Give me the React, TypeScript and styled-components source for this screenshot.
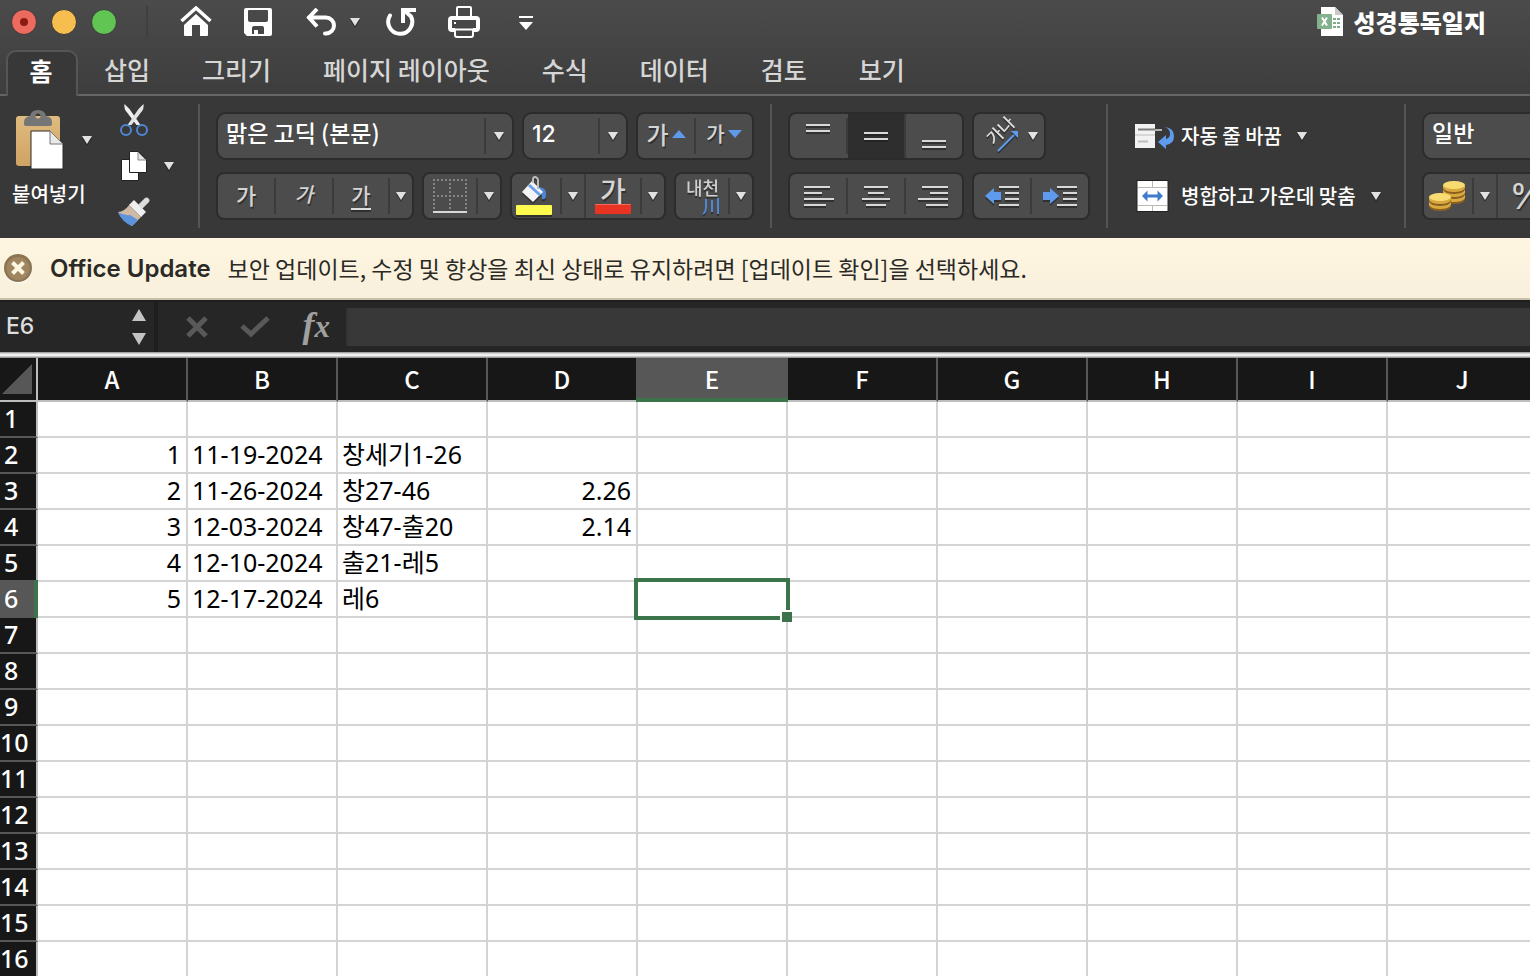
import React, { useState } from "react";
import styled, { createGlobalStyle, css } from "styled-components";

const UI_FONT = `Inter, "Noto Sans CJK KR", sans-serif`;
const KR_FONT = `"Noto Sans CJK KR", "Noto Sans", sans-serif`;
const CELL_FONT = `"Noto Sans", "Noto Sans CJK KR", sans-serif`;

const color = {
  ribbon: "#383838",
  control: "#4c4c4c",
  controlEdge: "#2c2c2c",
  line: "#656565",
  glyph: "#dedede",
  blue: "#5e9bec",
  green: "#3b734a",
  grid: "#d4d4d4",
  header: "#171717",
  headerActive: "#575757",
};

const GlobalStyle = createGlobalStyle`
  *, *::before, *::after { box-sizing: border-box; }
  body { margin: 0; background: #fff; font-family: ${KR_FONT}; }
  button, input, select { font: inherit; color: inherit; margin: 0; }
  button { cursor: pointer; }
`;

/* ---------- Window frame ---------- */

const Window = styled.div`
  display: flex;
  flex-direction: column;
  height: 100vh;
  overflow: hidden;
`;

const Chrome = styled.header`
  background: linear-gradient(#4b4b4b, #3d3d3d);
`;

const TitleBar = styled.div`
  display: flex;
  align-items: center;
  height: 44px;
  padding: 0 44px 0 11px;
`;

const Lights = styled.div`
  display: flex;
  gap: 14px;
  padding-right: 29px;
  border-right: 2px solid #3f3f3f;
  height: 32px;
  align-items: center;
`;

const Light = styled.button<{ $fill: string }>`
  display: flex;
  align-items: center;
  justify-content: center;
  width: 26px;
  height: 26px;
  padding: 0;
  border: 1px solid #3a3a3a;
  border-radius: 50%;
  background: ${(p) => p.$fill};

  &[data-edited="true"]::after {
    content: "";
    width: 8px;
    height: 8px;
    border-radius: 50%;
    background: #8c1a10;
  }
`;

const QuickBar = styled.div`
  display: flex;
  align-items: center;
  margin-left: 32px;
  gap: 32px;
`;

const PlainButton = styled.button`
  display: flex;
  align-items: center;
  gap: 13px;
  padding: 0;
  border: 0;
  background: none;
  color: #fff;
`;

const QuickPair = styled.div`
  display: flex;
  align-items: center;
  gap: 12px;
  margin: 0 -6px 0 2px;
`;

const CustomizeButton = styled(PlainButton)`
  padding: 2px 0 0 7px;
`;

const DocTitle = styled.h1`
  display: flex;
  align-items: center;
  gap: 10px;
  margin: 0 0 0 auto;
  color: #fff;
  font-size: 24px;
  line-height: 32px;
  font-weight: 800;
`;

const Tabs = styled.nav`
  display: flex;
  height: 52px;
  padding: 6px 0 0 6px;
  border-bottom: 2px solid ${color.line};
`;

const Tab = styled.button<{ $active?: boolean }>`
  flex: none;
  height: 44px;
  padding: 0 26px 6px;
  border: 0;
  background: none;
  color: #d6d6d6;
  font-size: 25px;
  line-height: 36px;
  font-weight: 500;
  white-space: nowrap;

  ${(p) =>
    p.$active &&
    css`
      width: 72px;
      height: 46px;
      padding: 0 2px 10px 0;
      border: 2px solid #565656;
      border-bottom: 0;
      border-radius: 10px 10px 0 0;
      background: ${color.ribbon};
      color: #fff;
      font-weight: 700;
    `}
`;

/* ---------- Ribbon ---------- */

const Ribbon = styled.section`
  display: flex;
  flex: none;
  height: 142px;
  overflow: hidden;
  background: ${color.ribbon};
`;

const Separator = styled.span`
  flex: none;
  width: 2px;
  margin: 8px 0 10px;
  background: #555;
`;

const ClipboardGroup = styled.div`
  display: flex;
  flex: none;
  width: 198px;
`;

const PasteButton = styled.button`
  display: flex;
  flex-direction: column;
  align-items: flex-start;
  width: 106px;
  padding: 12px 0 0 12px;
  border: 0;
  background: none;
  color: #fff;
  font-size: 20px;
  line-height: 28px;
  font-weight: 500;
  white-space: nowrap;
`;

const PasteIconRow = styled.span`
  display: flex;
  align-items: center;
  gap: 18px;
  height: 64px;
  margin: 0 0 8px 4px;
`;

const ClipboardTools = styled.div`
  display: flex;
  flex-direction: column;
  gap: 14px;
  padding: 8px 0 0 12px;
`;

const ToolButton = styled(PlainButton)`
  height: 32px;
  gap: 14px;
`;

const Group = styled.div`
  display: flex;
  flex: none;
  flex-direction: column;
  gap: 12px;
  padding: 16px;
`;

const GroupRow = styled.div`
  display: flex;
  gap: 8px;
`;

const Cluster = styled.div<{ $w?: number }>`
  display: flex;
  flex: none;
  width: ${(p) => (p.$w ? `${p.$w}px` : "auto")};
  height: 48px;
  overflow: hidden;
  border: 2px solid ${color.controlEdge};
  border-radius: 8px;
  background: ${color.control};
`;

const Divider = styled.span<{ $full?: boolean }>`
  flex: none;
  width: 2px;
  margin: ${(p) => (p.$full ? "0" : "4px 0")};
  background: #3b3b3b;
`;

const Segment = styled.button<{ $w: number; $active?: boolean }>`
  display: flex;
  flex: none;
  align-items: center;
  justify-content: center;
  gap: 10px;
  width: ${(p) => p.$w}px;
  padding: 0;
  border: 0;
  background: ${(p) => (p.$active ? "#2e2e2e" : "transparent")};
  color: ${color.glyph};
`;

const LetterSegment = styled(Segment)`
  gap: 3px;
  padding-bottom: 4px;
`;

const FillSegment = styled(Segment)`
  justify-content: flex-start;
  padding-left: 4px;
`;

const OrientationSegment = styled(Segment)`
  padding-left: 4px;
`;

const Glyph = styled.span<{ $size: number; $italic?: boolean; $underline?: boolean }>`
  font-size: ${(p) => p.$size}px;
  line-height: 28px;
  font-weight: 500;
  color: #d4d4d4;
  text-shadow: 1px 2px 0 #303030;
  font-style: ${(p) => (p.$italic ? "italic" : "normal")};
  ${(p) =>
    p.$underline &&
    css`
      border-bottom: 2px solid #dedede;
      margin-top: 2px;
      box-shadow: 0 2px 0 #303030;
    `}
`;

const Combo = styled.label<{ $w: number }>`
  display: flex;
  flex: none;
  align-items: stretch;
  width: ${(p) => p.$w}px;
  height: 48px;
  border: 2px solid ${color.controlEdge};
  border-radius: 10px;
  background: ${color.control};
`;

const ComboSelect = styled.select<{ $latin?: boolean }>`
  flex: 1;
  min-width: 0;
  padding: 0 0 ${(p) => (p.$latin ? 4 : 8)}px 8px;
  border: 0;
  outline: 0;
  appearance: none;
  background: transparent;
  color: #fff;
  font-family: ${(p) => (p.$latin ? UI_FONT : KR_FONT)};
  font-size: 23px;
  font-weight: 500;
`;

const ComboArrow = styled.span`
  display: flex;
  align-items: center;
  justify-content: center;
  width: 26px;
`;

const WrapGroup = styled(Group)`
  width: 296px;
  padding: 16px 0 16px 26px;
`;

const LabelButton = styled(PlainButton)`
  height: 48px;
  gap: 7px;
  font-size: 20px;
  line-height: 28px;
  font-weight: 500;
  white-space: nowrap;
`;

const LabelText = styled.span`
  margin-right: 8px;
`;

const Percent = styled.span`
  font-family: Inter, sans-serif;
  font-size: 36px;
  line-height: 40px;
  font-weight: 400;
  color: #d4d4d4;
  text-shadow: 1px 2px 0 #303030;
`;

/* ---------- Notice and formula bar ---------- */

const Notice = styled.aside`
  display: flex;
  flex: none;
  align-items: center;
  gap: 17px;
  height: 62px;
  padding-left: 4px;
  border-bottom: 2px solid #c9c0aa;
  background: linear-gradient(#fef6e0, #f8f0dc);
  color: #2b2a27;
  font-size: 23px;
  line-height: 32px;
  white-space: nowrap;
`;

const NoticeTitle = styled.strong`
  padding-top: 2px;
  font-family: ${UI_FONT};
  font-size: 24px;
  font-weight: 600;
`;

const FormulaBar = styled.div`
  display: flex;
  flex: none;
  height: 52px;
  border-top: 2px solid #1f1f1f;
  background: #262626;
`;

const NameBox = styled.div`
  display: flex;
  align-items: center;
  width: 158px;
  padding-right: 8px;
  border-right: 4px solid #1e1e1e;
`;

const NameInput = styled.input`
  flex: 1;
  min-width: 0;
  padding: 0 0 2px 6px;
  border: 0;
  outline: 0;
  background: transparent;
  color: #dedede;
  font-family: ${UI_FONT};
  font-size: 23px;
  font-weight: 500;
`;

const FormulaActions = styled.div`
  display: flex;
  align-items: center;
  justify-content: space-between;
  width: 188px;
  padding: 0 16px 0 28px;
`;

const FxButton = styled(PlainButton)`
  align-items: baseline;
  gap: 0;
  padding-bottom: 2px;
  color: #a0a0a0;
  font-family: "Liberation Serif", serif;
  font-style: italic;
  font-weight: 700;
  font-size: 36px;
  line-height: 40px;

  small {
    font-size: 31px;
  }
`;

const FormulaInput = styled.input`
  flex: 1;
  min-width: 0;
  margin: 6px 0;
  padding: 0 8px;
  border: 0;
  border-left: 2px solid #333;
  outline: 0;
  background: #383838;
  color: #fff;
  font-size: 23px;
`;

const SplitBar = styled.div`
  flex: none;
  height: 6px;
  background: linear-gradient(#8c8c8c, #f0f0f0 35%, #f0f0f0 60%, #808080);
`;

/* ---------- Sheet ---------- */

const Sheet = styled.main`
  flex: 1;
  min-height: 0;
  overflow: hidden;
  background: #fff;
`;

const Grid = styled.table`
  width: 1538px;
  table-layout: fixed;
  border-collapse: separate;
  border-spacing: 0;
  font-family: ${CELL_FONT};
  font-size: 25px;
  line-height: 32px;
`;

const IndexCol = styled.col`
  width: 38px;
`;

const Corner = styled.th`
  height: 44px;
  padding: 0;
  border-right: 2px solid #bdbdbd;
  border-bottom: 2px solid #bdbdbd;
  background: ${color.header};

  svg {
    display: block;
    margin: 0 0 0 2px;
  }
`;

const ColHead = styled.th<{ $active: boolean }>`
  position: relative;
  height: 44px;
  padding: 0;
  border-right: 2px solid ${color.headerActive};
  border-bottom: 2px solid #bdbdbd;
  background: ${(p) => (p.$active ? color.headerActive : color.header)};
  color: #fff;
  font-family: ${KR_FONT};
  font-size: 24px;
  font-weight: 500;
  ${(p) =>
    p.$active &&
    css`
      box-shadow: -2px 0 0 ${color.headerActive};

      &::after {
        content: "";
        position: absolute;
        left: -2px;
        right: -2px;
        bottom: -2px;
        height: 4px;
        background: ${color.green};
      }
    `}
`;

const RowHead = styled.th<{ $active: boolean; $wide: boolean }>`
  position: relative;
  height: 36px;
  padding: 0 0 2px ${(p) => (p.$wide ? 0 : 4)}px;
  border-right: 2px solid #bdbdbd;
  border-bottom: 2px solid ${color.headerActive};
  background: ${(p) => (p.$active ? color.headerActive : color.header)};
  color: #fff;
  font-weight: 500;
  text-align: left;
  ${(p) =>
    p.$active &&
    css`
      &::after {
        content: "";
        position: absolute;
        right: -2px;
        top: -2px;
        bottom: -2px;
        width: 4px;
        background: ${color.green};
      }
    `}
`;

const Cell = styled.td<{ $right: boolean }>`
  position: relative;
  height: 36px;
  padding: 0 5px 2px 4px;
  border-right: 2px solid ${color.grid};
  border-bottom: 2px solid ${color.grid};
  color: #000;
  text-align: ${(p) => (p.$right ? "right" : "left")};
  white-space: nowrap;
`;

const Selection = styled.span`
  position: absolute;
  z-index: 1;
  inset: -4px;
  border: 4px solid ${color.green};

  &::after {
    content: "";
    position: absolute;
    right: -6px;
    bottom: -6px;
    width: 12px;
    height: 12px;
    border-top: 2px solid #fff;
    border-left: 2px solid #fff;
    background: ${color.green};
  }
`;

/* ---------- Icons ---------- */

const Icon = styled.svg`
  display: block;
  flex: none;
`;

const ShadowIcon = styled(Icon)`
  overflow: visible;
  filter: drop-shadow(0 2px 0 rgba(30, 30, 30, 0.6));
`;

const Arrow = () => (
  <ShadowIcon width="10" height="8" viewBox="0 0 10 8" aria-hidden="true">
    <path d="M0 0H10L5 8z" fill="#e2e2e2" />
  </ShadowIcon>
);

const HomeIcon = () => (
  <Icon width="32" height="32" viewBox="0 0 32 32" fill="none">
    <path d="M1.500 15 16 2l14.500 13" stroke="#fff" strokeWidth="3.500" />
    <path d="M16 8 28 19v10q0 1-1 1h-7V19h-8v11H5q-1 0-1-1V19z" fill="#fff" />
  </Icon>
);

const SaveIcon = () => (
  <Icon width="28" height="28" viewBox="0 0 28 28">
    <path
      fillRule="evenodd"
      fill="#fff"
      d="M2 0H26q2 0 2 2V26q0 2-2 2H3L0 25V2Q0 0 2 0zM4 3V12q0 2 2 2H22q2 0 2-2V3q0-1-1-1H5Q4 2 4 3zM8 20v6h2v-4h4v4h6v-6q0-2-2-2h-8q-2 0-2 2z"
    />
  </Icon>
);

const UndoIcon = () => (
  <Icon width="32" height="28" viewBox="0 0 32 28" fill="none" stroke="#fff" strokeWidth="4">
    <path d="M11 1 3 9.500l8 9" />
    <path d="M3 9.500H20a8 8 0 0 1 0 16h-1" strokeLinecap="round" />
  </Icon>
);

const RedoIcon = () => (
  <Icon width="30" height="32" viewBox="0 0 30 32" fill="none" stroke="#fff" strokeWidth="4">
    <path d="M4 9.500A12 12 0 1 0 25 10.500L19 5" strokeLinecap="round" />
    <path d="M17 17V4H30" />
  </Icon>
);

const PrintIcon = () => (
  <Icon width="32" height="32" viewBox="0 0 32 32" fill="none" stroke="#fff">
    <path d="M9 11V2q0-1 1-1h12q1 0 1 1v9" strokeWidth="2" />
    <path d="M7 24H4q-2 0-2-2V14q0-2 2-2h24q2 0 2 2v8q0 2-2 2h-3" strokeWidth="4" />
    <path d="M7 23.500h18V29q0 2-2 2H9q-2 0-2-2z" strokeWidth="2" />
    <path d="M6 17h2" strokeWidth="2" />
  </Icon>
);

const CustomizeIcon = () => (
  <Icon width="14" height="14" viewBox="0 0 14 14">
    <path d="M0 0h14v2H0zM0 6h14L7 14z" fill="#fff" />
  </Icon>
);

const BookIcon = () => (
  <Icon width="27" height="30" viewBox="0 0 27 30">
    <path d="M4 0h14l8 8v21H4z" fill="#fff" />
    <path d="M18 0l8 8h-8z" fill="#c9c9c9" />
    <path
      d="M16 11h3v2h-3zm4 0h3v2h-3zm-4 4h3v2h-3zm4 0h3v2h-3zm-4 4h3v2h-3zm4 0h3v2h-3z"
      fill="#80ad89"
    />
    <rect y="7" width="15" height="15" rx="1" fill="#83b18d" />
    <path d="M5 10.500 10 18.500M10 10.500 5 18.500" stroke="#fff" strokeWidth="2" />
  </Icon>
);

const PasteIcon = () => (
  <Icon width="48" height="60" viewBox="0 0 48 60">
    <defs>
      <linearGradient id="board" x1="0" y1="0" x2="0" y2="1">
        <stop offset="0" stopColor="#dfbb80" />
        <stop offset="1" stopColor="#cfa362" />
      </linearGradient>
    </defs>
    <rect x="0" y="6" width="44" height="50" rx="3" fill="url(#board)" />
    <path
      fillRule="evenodd"
      d="M8 12q0-5 6-6 1-6 8-6t8 6q6 1 6 6v2q0 2-3 2H11q-3 0-3-2zM22 3.500a2.500 2.500 0 1 0 0 5 2.500 2.500 0 0 0 0-5z"
      fill="#767676"
    />
    <path d="M15 21h19l13 13v25H15z" fill="#fff" stroke="#2a2a2a" />
    <path d="M34 21l13 13H34z" fill="#e9e9e9" stroke="#777" />
  </Icon>
);

const CutIcon = () => (
  <Icon width="32" height="32" viewBox="0 0 32 32" fill="none">
    <path d="M6.500 0q-1 5 3 9l9 12h4L11.500 5z" fill="#f0f0f0" />
    <path d="M25.500 0q1 5-3 9l-9 12h-4L20.500 5z" fill="#e4e4e4" />
    <circle cx="8" cy="26" r="5" stroke="#4f86d3" strokeWidth="2" />
    <circle cx="24" cy="26" r="5" stroke="#4f86d3" strokeWidth="2" />
  </Icon>
);

const CopyIcon = () => (
  <Icon width="32" height="32" viewBox="0 0 32 32" stroke="#222">
    <path d="M3.500 9.500h17v21h-17z" fill="#fff" />
    <path d="M11.500 1.500h9l8 8v13h-17z" fill="#fff" />
    <path d="M20 2l8 8h-8z" fill="#e6e6e6" stroke="#888" />
  </Icon>
);

const BrushIcon = () => (
  <Icon width="32" height="30" viewBox="0 0 32 30">
    <path d="M12 7 24 19 14 29Q4 24 0 15q6 0 12-8z" fill="#d0b9a5" />
    <path d="M0 15q6 4 12 3 5 3 8 5l-6 6Q4 25 0 15z" fill="#5b93dd" />
    <path d="M16 3l12 12-5 5L11 8z" fill="#efefef" />
    <path d="M20 8 26.500 1.500q2-2 4 0t0 4L24 12z" fill="#dcdcdc" />
    <path d="M11 8l12 12" stroke="#a9a9a9" />
  </Icon>
);

const TriangleUp = () => (
  <Icon width="14" height="8" viewBox="0 0 14 8">
    <path d="M7 0l7 8H0z" fill={color.blue} />
  </Icon>
);

const TriangleDown = () => (
  <Icon width="14" height="8" viewBox="0 0 14 8">
    <path d="M0 0h14L7 8z" fill={color.blue} />
  </Icon>
);

const BordersIcon = () => (
  <Icon width="34" height="34" viewBox="0 0 34 34" fill="none" stroke="#858585" strokeWidth="2">
    <path d="M0 1h34M0 17h34" strokeDasharray="2 2" />
    <path d="M1 0v32M17 0v32M33 0v32" strokeDasharray="2 2" />
    <path d="M0 33h34" stroke="#d8d8d8" />
  </Icon>
);

const FillIcon = () => (
  <ShadowIcon width="36" height="38" viewBox="0 0 36 38">
    <path d="M22 10q8 0 8 7v3q-1 3-4 2 0-6-4-9z" fill="#4f86d3" />
    <path d="M16 4 27 15 17 25 6 15z" fill="#f5f5f5" />
    <path d="M13 8l11 10" stroke="#6aa2ec" strokeWidth="3" />
    <path d="M17 6V3q0-3 2-3t3 3v9" fill="none" stroke="#bdbdbd" strokeWidth="2" />
    <rect x="0" y="28" width="36" height="10" rx="1" fill="#fdfb4e" />
  </ShadowIcon>
);

const FontColor = styled.span`
  display: flex;
  flex-direction: column;
  align-items: center;
  height: 40px;
`;

const ColorSwatch = styled.span`
  width: 36px;
  height: 10px;
  border-radius: 1px;
  border-top: 1px solid #f36a5d;
  background: #e93323;
`;

const PhoneticIcon = () => (
  <ShadowIcon width="36" height="40" viewBox="0 0 36 40">
    <text x="2" y="19" fontSize="18" fontFamily={KR_FONT} fontWeight="500" fill="#cfcfcf">
      내천
    </text>
    <path
      d="M22 23v8q0 5-3 7M28 24v12M34 22v16"
      stroke="#4f86d3"
      strokeWidth="2"
      fill="none"
    />
  </ShadowIcon>
);

type Bar = [x: number, y: number, w: number];

const Bars = ({ bars, w = 30, h = 24 }: { bars: Bar[]; w?: number; h?: number }) => (
  <ShadowIcon width={w} height={h} viewBox={`0 0 ${w} ${h}`}>
    {bars.map(([x, y, width]) => (
      <rect key={y} x={x} y={y} width={width} height="2" fill="#d8d8d8" />
    ))}
  </ShadowIcon>
);

const OrientationIcon = () => (
  <ShadowIcon width="34" height="36" viewBox="0 0 34 36">
    <text
      transform="translate(10 28) rotate(-45)"
      fontSize="17"
      fontFamily={KR_FONT}
      fontWeight="500"
      fill="#dedede"
    >
      가나
    </text>
    <path d="M14 33 30 17" stroke={color.blue} strokeWidth="2" />
    <path d="M34 13v7l-7-7z" fill={color.blue} />
  </ShadowIcon>
);

const IndentIcon = ({ out }: { out?: boolean }) => (
  <ShadowIcon width="34" height="22" viewBox="0 0 34 22">
    <path
      d="M14 1h20v2H14zM20 7h14v2H20zM20 13h14v2H20zM14 19h20v2H14z"
      fill="#d8d8d8"
    />
    {out ? (
      <path d="M0 11 9 3v4h7v8H9v4z" fill={color.blue} />
    ) : (
      <path d="M16 11 7 3v4H0v8h7v4z" fill={color.blue} />
    )}
  </ShadowIcon>
);

const WrapIcon = () => (
  <Icon width="40" height="26" viewBox="0 0 40 26">
    <rect x="1" y="1" width="20" height="24" fill="#f2f2f2" />
    <path d="M1 12h20" stroke="#bbb" />
    <path d="M4 6.500h17" stroke="#7d7d7d" strokeWidth="2" />
    <path d="M4 18.500h10" stroke="#bdbdbd" strokeWidth="2" />
    <path d="M21 7h7" stroke="#b5b5b5" strokeWidth="2" />
    <path d="M31 4q9 1 9 9t-8 9v4l-8-7 8-7v4q4-1 4-5 0-5-5-7z" fill={color.blue} />
  </Icon>
);

const MergeIcon = () => (
  <Icon width="40" height="32" viewBox="0 0 40 32">
    <rect x="3" y="0.500" width="31" height="31" fill="#fff" stroke="#222" />
    <path d="M4 7.500h29M4 25.500h29M18.500 1v6M18.500 26v5" stroke="#b9b9b9" />
    <path d="M8 16 13.500 10.500v4h10v-4L29 16l-5.500 5.500v-4h-10v4z" fill="#3f7ccb" />
  </Icon>
);

const Coins = ({ x, y, n }: { x: number; y: number; n: number }) => (
  <g>
    {Array.from({ length: n }, (_, i) => (
      <g key={i} transform={`translate(${x} ${y + (n - 1 - i) * 5})`}>
        <path d="M0 4v5q2 4 11 4t11-4V4z" fill="#8a5f1e" />
        <path d="M0 4v3q2 4 11 4t11-4V4z" fill="#d9a93f" />
        <ellipse cx="11" cy="4" rx="11" ry="4" fill="#f8dc72" />
      </g>
    ))}
  </g>
);

const CoinsIcon = () => (
  <Icon width="38" height="30" viewBox="0 0 38 30">
    <Coins x={14} y={0} n={3} />
    <Coins x={0} y={12} n={2} />
  </Icon>
);

const CloseNoticeIcon = () => (
  <Icon width="29" height="30" viewBox="0 0 29 30">
    <circle cx="14" cy="16" r="14" fill="#fff" />
    <circle cx="14" cy="15" r="14" fill="#8b7452" />
    <circle cx="14" cy="15.500" r="11.500" fill="#a08660" />
    <path d="M8.500 9.500l11 11M19.500 9.500l-11 11" stroke="#fdf6e0" strokeWidth="4" />
  </Icon>
);

const StepperIcon = () => (
  <Icon width="14" height="36" viewBox="0 0 14 36">
    <path d="M7 0l7 12H0zM0 24h14L7 36z" fill="#c4c4c4" />
  </Icon>
);

const CancelIcon = () => (
  <Icon width="22" height="22" viewBox="0 0 22 22">
    <path d="M2 2l18 18M20 2 2 20" stroke="#595959" strokeWidth="5" />
  </Icon>
);

const AcceptIcon = () => (
  <Icon width="30" height="22" viewBox="0 0 30 22" fill="none">
    <path d="M2 10l9 8L28 2" stroke="#595959" strokeWidth="5" />
  </Icon>
);

/* ---------- Data ---------- */

const TABS = ["홈", "삽입", "그리기", "페이지 레이아웃", "수식", "데이터", "검토", "보기"];
const COLUMNS = ["A", "B", "C", "D", "E", "F", "G", "H", "I", "J"];
const ROWS = Array.from({ length: 16 }, (_, i) => i + 1);
const RIGHT_ALIGNED = new Set(["A", "D"]);

const CELLS: Record<string, string> = {
  A2: "1", B2: "11-19-2024", C2: "창세기1-26",
  A3: "2", B3: "11-26-2024", C3: "창27-46", D3: "2.26",
  A4: "3", B4: "12-03-2024", C4: "창47-출20", D4: "2.14",
  A5: "4", B5: "12-10-2024", C5: "출21-레5",
  A6: "5", B6: "12-17-2024", C6: "레6",
};

const ArrowSegment = ({ label }: { label: string }) => (
  <Segment $w={22} aria-label={label}>
    <Arrow />
  </Segment>
);

export default function App() {
  const [tab, setTab] = useState("홈");
  const [selected, setSelected] = useState("E6");
  const [formula, setFormula] = useState("");
  const activeCol = selected.charAt(0);
  const activeRow = Number(selected.slice(1));

  return (
    <Window>
      <GlobalStyle />
      <Chrome>
        <TitleBar>
          <Lights>
            <Light $fill="#ed6a5f" data-edited="true" aria-label="닫기" />
            <Light $fill="#f5be4f" aria-label="최소화" />
            <Light $fill="#61c554" aria-label="확대" />
          </Lights>
          <QuickBar>
            <PlainButton aria-label="홈 화면"><HomeIcon /></PlainButton>
            <PlainButton aria-label="저장"><SaveIcon /></PlainButton>
            <QuickPair>
              <PlainButton aria-label="실행 취소"><UndoIcon /></PlainButton>
              <PlainButton aria-label="실행 취소 목록"><Arrow /></PlainButton>
            </QuickPair>
            <PlainButton aria-label="다시 실행"><RedoIcon /></PlainButton>
            <PlainButton aria-label="인쇄"><PrintIcon /></PlainButton>
            <CustomizeButton aria-label="도구 모음 사용자 지정"><CustomizeIcon /></CustomizeButton>
          </QuickBar>
          <DocTitle>
            <BookIcon />
            성경통독일지
          </DocTitle>
        </TitleBar>
        <Tabs>
          {TABS.map((name) => (
            <Tab key={name} $active={name === tab} onClick={() => setTab(name)}>
              {name}
            </Tab>
          ))}
        </Tabs>
      </Chrome>

      <Ribbon>
        <ClipboardGroup>
          <PasteButton>
            <PasteIconRow>
              <PasteIcon />
              <Arrow />
            </PasteIconRow>
            붙여넣기
          </PasteButton>
          <ClipboardTools>
            <ToolButton aria-label="잘라내기"><CutIcon /></ToolButton>
            <ToolButton aria-label="복사">
              <CopyIcon />
              <Arrow />
            </ToolButton>
            <ToolButton aria-label="서식 복사"><BrushIcon /></ToolButton>
          </ClipboardTools>
        </ClipboardGroup>
        <Separator />

        <Group>
          <GroupRow>
            <Combo $w={298}>
              <ComboSelect aria-label="글꼴" defaultValue="맑은 고딕 (본문)">
                <option>맑은 고딕 (본문)</option>
              </ComboSelect>
              <Divider />
              <ComboArrow><Arrow /></ComboArrow>
            </Combo>
            <Combo $w={106}>
              <ComboSelect $latin aria-label="글꼴 크기" defaultValue="12">
                <option>12</option>
              </ComboSelect>
              <Divider />
              <ComboArrow><Arrow /></ComboArrow>
            </Combo>
            <Cluster $w={118}>
              <LetterSegment $w={56} aria-label="글꼴 크게">
                <Glyph $size={24}>가</Glyph>
                <TriangleUp />
              </LetterSegment>
              <Divider />
              <LetterSegment $w={56} aria-label="글꼴 작게">
                <Glyph $size={20}>가</Glyph>
                <TriangleDown />
              </LetterSegment>
            </Cluster>
          </GroupRow>
          <GroupRow>
            <Cluster $w={198}>
              <LetterSegment $w={56} aria-label="굵게"><Glyph $size={22}>가</Glyph></LetterSegment>
              <Divider />
              <LetterSegment $w={56} aria-label="기울임꼴"><Glyph $size={20} $italic>가</Glyph></LetterSegment>
              <Divider />
              <LetterSegment $w={54} aria-label="밑줄"><Glyph $size={21} $underline>가</Glyph></LetterSegment>
              <Divider />
              <ArrowSegment label="밑줄 옵션" />
            </Cluster>
            <Cluster $w={80}>
              <Segment $w={52} aria-label="테두리"><BordersIcon /></Segment>
              <Divider />
              <ArrowSegment label="테두리 옵션" />
            </Cluster>
            <Cluster $w={156}>
              <FillSegment $w={48} aria-label="채우기 색"><FillIcon /></FillSegment>
              <Divider />
              <ArrowSegment label="채우기 색 옵션" />
              <Divider $full />
              <Segment $w={54} aria-label="글꼴 색">
                <FontColor>
                  <Glyph $size={28}>가</Glyph>
                  <ColorSwatch />
                </FontColor>
              </Segment>
              <Divider />
              <ArrowSegment label="글꼴 색 옵션" />
            </Cluster>
            <Cluster $w={80}>
              <Segment $w={52} aria-label="윗주"><PhoneticIcon /></Segment>
              <Divider />
              <ArrowSegment label="윗주 옵션" />
            </Cluster>
          </GroupRow>
        </Group>
        <Separator />

        <Group>
          <GroupRow>
            <Cluster $w={176}>
              <Segment $w={56} aria-label="위쪽 맞춤"><Bars bars={[[3, 0, 24], [3, 6, 24]]} /></Segment>
              <Divider />
              <Segment $w={56} $active aria-label="가운데 맞춤"><Bars bars={[[3, 8, 24], [3, 14, 24]]} /></Segment>
              <Divider $full />
              <Segment $w={56} aria-label="아래쪽 맞춤"><Bars bars={[[3, 16, 24], [3, 22, 24]]} /></Segment>
            </Cluster>
            <Cluster $w={74}>
              <OrientationSegment $w={70} aria-label="방향">
                <OrientationIcon />
                <Arrow />
              </OrientationSegment>
            </Cluster>
          </GroupRow>
          <GroupRow>
            <Cluster $w={176}>
              <Segment $w={56} aria-label="왼쪽 맞춤">
                <Bars bars={[[1, 2, 26], [1, 8, 18], [1, 14, 30], [1, 20, 22]]} w={30} />
              </Segment>
              <Divider />
              <Segment $w={56} aria-label="텍스트 가운데 맞춤">
                <Bars bars={[[3, 2, 24], [7, 8, 16], [1, 14, 28], [5, 20, 20]]} />
              </Segment>
              <Divider />
              <Segment $w={56} aria-label="오른쪽 맞춤">
                <Bars bars={[[3, 2, 26], [11, 8, 18], [-1, 14, 30], [7, 20, 22]]} />
              </Segment>
            </Cluster>
            <Cluster $w={118}>
              <Segment $w={56} aria-label="내어쓰기"><IndentIcon out /></Segment>
              <Divider />
              <Segment $w={56} aria-label="들여쓰기"><IndentIcon /></Segment>
            </Cluster>
          </GroupRow>
        </Group>
        <Separator />

        <WrapGroup>
          <LabelButton>
            <WrapIcon />
            <LabelText>자동 줄 바꿈</LabelText>
            <Arrow />
          </LabelButton>
          <LabelButton>
            <MergeIcon />
            <LabelText>병합하고 가운데 맞춤</LabelText>
            <Arrow />
          </LabelButton>
        </WrapGroup>
        <Separator />

        <Group>
          <Combo $w={240}>
            <ComboSelect aria-label="표시 형식" defaultValue="일반">
              <option>일반</option>
            </ComboSelect>
            <Divider />
            <ComboArrow><Arrow /></ComboArrow>
          </Combo>
          <Cluster $w={240}>
            <Segment $w={48} aria-label="회계 표시 형식"><CoinsIcon /></Segment>
            <Divider />
            <ArrowSegment label="회계 표시 형식 옵션" />
            <Divider $full />
            <Segment $w={58} aria-label="백분율 스타일"><Percent>%</Percent></Segment>
          </Cluster>
        </Group>
      </Ribbon>

      <Notice>
        <PlainButton aria-label="알림 닫기"><CloseNoticeIcon /></PlainButton>
        <NoticeTitle>Office Update</NoticeTitle>
        <span>보안 업데이트, 수정 및 향상을 최신 상태로 유지하려면 [업데이트 확인]을 선택하세요.</span>
      </Notice>

      <FormulaBar>
        <NameBox>
          <NameInput aria-label="이름 상자" value={selected} readOnly />
          <PlainButton aria-label="이름 목록"><StepperIcon /></PlainButton>
        </NameBox>
        <FormulaActions>
          <PlainButton aria-label="취소" onClick={() => setFormula("")}><CancelIcon /></PlainButton>
          <PlainButton aria-label="입력"><AcceptIcon /></PlainButton>
          <FxButton aria-label="함수 삽입">f<small>x</small></FxButton>
        </FormulaActions>
        <FormulaInput
          aria-label="수식 입력줄"
          value={formula}
          onChange={(e) => setFormula(e.target.value)}
        />
      </FormulaBar>
      <SplitBar />

      <Sheet>
        <Grid>
          <colgroup>
            <IndexCol />
            {COLUMNS.map((c) => (
              <col key={c} />
            ))}
          </colgroup>
          <thead>
            <tr>
              <Corner aria-label="모두 선택">
                <Icon width="30" height="30" viewBox="0 0 30 30">
                  <path d="M30 0v30H0z" fill={color.headerActive} />
                </Icon>
              </Corner>
              {COLUMNS.map((c) => (
                <ColHead key={c} scope="col" $active={c === activeCol}>
                  {c}
                </ColHead>
              ))}
            </tr>
          </thead>
          <tbody>
            {ROWS.map((r) => (
              <tr key={r}>
                <RowHead scope="row" $active={r === activeRow} $wide={r > 9}>
                  {r}
                </RowHead>
                {COLUMNS.map((c) => {
                  const id = `${c}${r}`;
                  return (
                    <Cell key={id} $right={RIGHT_ALIGNED.has(c)} onClick={() => setSelected(id)}>
                      {CELLS[id]}
                      {id === selected && <Selection />}
                    </Cell>
                  );
                })}
              </tr>
            ))}
          </tbody>
        </Grid>
      </Sheet>
    </Window>
  );
}
